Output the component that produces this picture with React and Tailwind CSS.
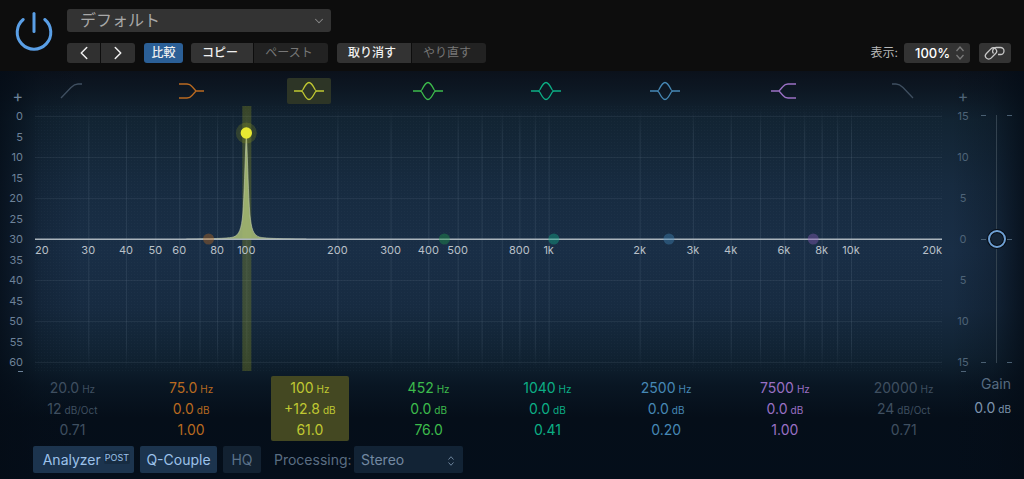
import { ChevronDown, ChevronLeft, ChevronRight } from 'lucide-react';

const BANDS = [
  { id: 'lowcut',    name: 'Low Cut',    freq: '20.0',  gain: '12',    unit: 'dB/Oct', q: '0.71', text: 'text-[#3f4f60]' },
  { id: 'lowshelf',  name: 'Low Shelf',  freq: '75.0',  gain: '0.0',   unit: 'dB', q: '1.00', hz: 75,   color: '#b96a20', text: 'text-[#b96a20]' },
  { id: 'peak1',     name: 'Peak 1',     freq: '100',   gain: '+12.8', unit: 'dB', q: '61.0', hz: 100,  color: '#e8e832', text: 'text-[#c0c832]', active: true },
  { id: 'peak2',     name: 'Peak 2',     freq: '452',   gain: '0.0',   unit: 'dB', q: '76.0', hz: 452,  color: '#1f9a4a', text: 'text-[#3dbb4c]' },
  { id: 'peak3',     name: 'Peak 3',     freq: '1040',  gain: '0.0',   unit: 'dB', q: '0.41', hz: 1040, color: '#12b08a', text: 'text-[#0cae85]' },
  { id: 'peak4',     name: 'Peak 4',     freq: '2500',  gain: '0.0',   unit: 'dB', q: '0.20', hz: 2500, color: '#4088b8', text: 'text-[#4688b5]' },
  { id: 'highshelf', name: 'High Shelf', freq: '7500',  gain: '0.0',   unit: 'dB', q: '1.00', hz: 7500, color: '#8a5cb8', text: 'text-[#9a70c4]' },
  { id: 'highcut',   name: 'High Cut',   freq: '20000', gain: '24',    unit: 'dB/Oct', q: '0.71', text: 'text-[#3f4f60]' },
];

const SHAPES = {
  lowcut:    'M5 20 L15 9.5 Q18.5 6 22 6 H26',
  lowshelf:  'M4 6 H12 Q15 6 17 8.5 L21 13 H29 M4 20 H12 Q15 20 17 17.5 L21 13',
  peak:      'M0 13 H7 Q8 13 9 11.5 Q12.5 4.5 15 4.5 Q17.5 4.5 21 11.5 Q22 13 23 13 H30 M7 13 Q8 13 9 14.5 Q12.5 21.5 15 21.5 Q17.5 21.5 21 14.5 Q22 13 23 13',
  highshelf: 'M2 13 H10 L14 8.5 Q16 6 19 6 H27 M10 13 L14 17.5 Q16 20 19 20 H27',
  highcut:   'M4 6 H8 Q11.5 6 15 9.5 L25 20',
};

const LABELS = [
  [20, '20'], [30, '30'], [40, '40'], [50, '50'], [60, '60'], [80, '80'], [100, '100'],
  [200, '200'], [300, '300'], [400, '400'], [500, '500'], [800, '800'], [1000, '1k'],
  [2000, '2k'], [3000, '3k'], [4000, '4k'], [6000, '6k'], [8000, '8k'], [10000, '10k'], [20000, '20k'],
];

const GRID = [10, 100, 1000]
  .flatMap(d => [1, 2, 3, 4, 5, 6, 7, 8, 9].map(n => n * d))
  .filter(f => f > 20)
  .concat(10000);

// position on the 20 Hz – 20 kHz log axis
const pos = hz => `${(Math.log10(hz / 20) / 3) * 100}%`;

const PEAK = 'M-60 133 C-30 132.7 -18 132.3 -13 131 C-7 129 -5 123 -3.5 108 C-2 88 -1.5 60 0 27 C1.5 60 2 88 3.5 108 C5 123 7 129 13 131 C18 132.3 30 132.7 60 133';

function ShapeIcon({ id }) {
  return (
    <svg width="30" height="26" viewBox="0 0 30 26" fill="none"
         stroke="currentColor" strokeWidth="1.3" aria-hidden="true">
      <path d={SHAPES[id] || SHAPES.peak} />
    </svg>
  );
}

function Stepper({ className }) {
  return (
    <svg width="10" height="14" viewBox="0 0 10 14" fill="none" stroke="currentColor"
         strokeWidth="1.3" className={className} aria-hidden="true">
      <path d="M1.5 5 L5 1 L8.5 5 M1.5 9 L5 13 L8.5 9" />
    </svg>
  );
}

function Header() {
  return (
    <header className="flex h-[71px] items-start bg-[#0d0d0d] pt-[9px] pr-[13px] text-[13px] text-[#f0f0f0]">
      <button type="button" aria-label="Power" className="flex w-[67px] justify-center text-[#5a9fe6]">
        <svg width="42" height="44" viewBox="0 0 42 44" fill="none" stroke="currentColor"
             strokeWidth="3" strokeLinecap="round">
          <path d="M21 4.500 V22.500" />
          <path d="M10.200 10.500 A16.800 16.800 0 1 0 31.800 10.500" />
        </svg>
      </button>

      <div className="flex flex-1 flex-col gap-[11px]">
        <div className="relative w-[264px]">
          <select aria-label="プリセット"
                  className="block h-[23px] w-full appearance-none rounded-[3px] bg-[#333] pl-[13px] text-[16px] leading-[23px] text-[#a8a8a8]">
            <option>デフォルト</option>
          </select>
          <ChevronDown size={14} strokeWidth={1.8} className="pointer-events-none absolute top-[5px] right-[5px] text-[#8a8a8a]" />
        </div>

        <div className="flex h-5 items-stretch leading-5">
          <div className="flex gap-px">
            <button type="button" aria-label="前へ" className="flex w-[33px] items-center justify-center rounded-l-[3px] bg-[#303030]">
              <ChevronLeft size={22} strokeWidth={1.6} />
            </button>
            <button type="button" aria-label="次へ" className="flex w-[34px] items-center justify-center rounded-r-[3px] bg-[#303030]">
              <ChevronRight size={22} strokeWidth={1.6} />
            </button>
          </div>
          <button type="button" className="ml-[9px] w-[39px] rounded-[3px] bg-[#2b5f96] text-[12px] font-medium">比較</button>
          <div className="ml-2 flex gap-px">
            <button type="button" className="w-[62px] rounded-l-[3px] bg-[#333] pr-1 text-[12px] font-medium">コピー</button>
            <button type="button" disabled className="w-[74px] rounded-r-[3px] bg-[#222] pr-1 text-[12px] text-[#777]">ペースト</button>
          </div>
          <div className="ml-[9px] flex gap-px">
            <button type="button" className="w-[74px] rounded-l-[3px] bg-[#333] pr-1 text-[12px] font-medium">取り消す</button>
            <button type="button" disabled className="w-[74px] rounded-r-[3px] bg-[#222] pr-1 text-[12px] text-[#777]">やり直す</button>
          </div>

          <label htmlFor="zoom" className="ml-auto text-[12px] text-[#b8b8b8]">表示:</label>
          <div className="relative ml-[6px]">
            <select id="zoom" className="block h-5 w-[66px] appearance-none rounded-[3px] bg-[#333] pl-[11px] text-[13px] leading-5 font-medium text-white">
              <option>100%</option>
            </select>
            <Stepper className="pointer-events-none absolute top-[3px] right-[5px] text-[#7a7a7a]" />
          </div>
          <button type="button" aria-label="リンク" className="ml-[9px] flex w-8 items-center justify-center rounded-[3px] bg-[#333] text-[#c8c8c8]">
            <svg width="22" height="16" viewBox="0 0 22 16" fill="none" stroke="currentColor" strokeWidth="1.3">
              <path d="M9.500 8.500 C7.500 6.500 9 2.500 12 2.500 H16.500 A3.500 3.500 0 0 1 16.500 9.500 H14" />
              <rect x="0.500" y="5.200" width="13" height="6.600" rx="3.300" transform="rotate(-45 7 8.500)" />
            </svg>
          </button>
        </div>
      </div>
    </header>
  );
}

function Scale({ values, className }) {
  return (
    <div className={`-mt-4 flex flex-col text-[11px] leading-[13px] ${className}`}>
      <span className="text-[16px]">+</span>
      <div className="mt-[7px] flex h-[260px] flex-col justify-between">
        {values.map((v, i) => <span key={i}>{v}</span>)}
      </div>
      <span className="mt-px h-[2px] w-[5px] border-b border-current" />
    </div>
  );
}

function Plot() {
  return (
    <svg className="h-[266px] min-w-0 flex-1 overflow-visible" role="img" aria-label="EQ curve">
      <defs>
        <pattern id="mesh" width="3" height="3" patternUnits="userSpaceOnUse">
          <rect width="1" height="1" fill="#6f8ba8" opacity="0.05" />
        </pattern>
        <linearGradient id="fade" x1="0" y1="0" x2="0" y2="1">
          <stop offset="0" stopColor="#8095a8" stopOpacity="0" />
          <stop offset="0.1" stopColor="#8095a8" stopOpacity="0.15" />
          <stop offset="0.9" stopColor="#8095a8" stopOpacity="0.15" />
          <stop offset="1" stopColor="#8095a8" stopOpacity="0" />
        </linearGradient>
      </defs>
      <rect width="100%" height="266" fill="url(#mesh)" />

      {GRID.map(f => (
        <rect key={f} x={pos(f)} y="2" width="1" height="262" fill="url(#fade)" />
      ))}
      {[10, 51, 92, 174, 215, 256].map(y => (
        <rect key={y} y={y} width="100%" height="1" fill="#8095a8" opacity="0.12" />
      ))}

      <svg x={pos(100)} overflow="visible">
        <rect x="-4" y="0" width="9" height="265" fill="#a0a820" opacity="0.28" />
        <path d={PEAK} fill="#a4b872" fillOpacity="0.9" stroke="#c4ceb0" strokeWidth="1" strokeOpacity="0.6" />
      </svg>
      <rect y="132.500" width="100%" height="1.500" fill="#aab4bc" />

      {BANDS.filter(b => b.hz && !b.active).map(b => (
        <circle key={b.id} cx={pos(b.hz)} cy="133" r="5.500" fill={b.color} opacity="0.4" />
      ))}
      <circle cx={pos(100)} cy="27" r="10.500" fill="#a0a820" opacity="0.22" />
      <circle cx={pos(100)} cy="27" r="5.700" fill="#e8e832" />

      {LABELS.map(([f, label]) => (
        <text key={f} x={pos(f)} y="148" fontSize="11" fill="#b9c0c8"
              textAnchor={f === 20 ? 'start' : f === 20000 ? 'end' : 'middle'}>
          {label}
        </text>
      ))}
    </svg>
  );
}

function Ticks() {
  return (
    <div className="flex w-[5px] flex-col justify-between">
      <i className="h-px bg-[#4a5f72]" />
      <i className="h-px bg-[#4a5f72]" />
      <i className="h-px bg-[#4a5f72]" />
    </div>
  );
}

function Fader() {
  return (
    <div className="mt-[9px] mr-3 flex h-[248px] gap-px">
      <Ticks />
      <div className="h-full w-[19px]">
        <input type="range" min="-15" max="15" defaultValue="0" aria-label="Gain"
               className="block h-full w-[19px] appearance-none bg-[linear-gradient(#33424f,#33424f)] bg-[length:1px_100%] bg-center bg-no-repeat [writing-mode:vertical-lr] [&::-webkit-slider-thumb]:size-[18px] [&::-webkit-slider-thumb]:appearance-none [&::-webkit-slider-thumb]:rounded-full [&::-webkit-slider-thumb]:border-2 [&::-webkit-slider-thumb]:border-[#6fa0d4] [&::-webkit-slider-thumb]:bg-[#142436] [&::-webkit-slider-thumb]:shadow-[0_0_0_1px_#060c14,inset_0_0_0_1px_#060c14]" />
      </div>
      <Ticks />
    </div>
  );
}

function Unit({ children }) {
  return <small className="ml-[3px] text-[10px] leading-none">{children}</small>;
}

function BandValues({ band }) {
  return (
    <div className={`w-[78px] rounded-[2px] py-px text-center text-[14px] leading-[21px] whitespace-nowrap ${band.text} ${band.active ? 'bg-[#444822]' : ''}`}>
      <p>{band.freq}<Unit>Hz</Unit></p>
      <p>{band.gain}<Unit>{band.unit}</Unit></p>
      <p>{band.q}</p>
    </div>
  );
}

function Footer() {
  return (
    <footer className="mt-[5px] flex h-[27px] items-stretch pl-[33px] text-[14px] leading-[27px]">
      <button type="button" className="flex w-[101px] justify-end gap-[3px] rounded-[2px] bg-[#1c344e] pr-1 text-[#9cc2ea]">
        Analyzer
        <span className="mt-[5px] h-[13px] rounded-[2px] bg-[#172c42] px-px text-[9px] leading-[14px]">POST</span>
      </button>
      <button type="button" className="ml-[6px] w-[77px] rounded-[2px] bg-[#1c344e] text-[#9cc2ea]">Q-Couple</button>
      <button type="button" className="ml-[6px] w-[38px] rounded-[2px] bg-[#122131] text-[#5a7189]">HQ</button>
      <label htmlFor="processing" className="ml-[13px] w-20 text-[#5a6d82]">Processing:</label>
      <div className="relative">
        <select id="processing" className="block h-[27px] w-[109px] appearance-none rounded-[2px] bg-[#122335] pl-[7px] text-[14px] leading-[27px] text-[#7389a2]">
          <option>Stereo</option>
        </select>
        <Stepper className="pointer-events-none absolute top-[10px] right-[7px] h-[10px] text-[#7389a2]" />
      </div>
    </footer>
  );
}

export default function App() {
  return (
    <div className="flex min-h-screen flex-col bg-[#040e1a] font-['Inter','Noto_Sans_CJK_JP',sans-serif]">
      <Header />
      <main className="flex-1 bg-[linear-gradient(to_right,#040c16cc,#040c1688_2%,#040c1633_4%,#040c1600_8%,#040c1600_93%,#040c1644_97%,#040c16cc),linear-gradient(#0b111b,#0d1824_5%,#122433_12%,#172b40_28%,#192e46_44%,#172b41_58%,#102232_70%,#091623_77%,#050e19_85%,#040e1a)] pb-[6px]">
        <div className="flex h-[35px] pt-[7px] pr-[62px] pl-3">
          <div className="grid flex-1 grid-cols-8 justify-items-center">
            {BANDS.map(b => (
              <button key={b.id} type="button" aria-label={b.name}
                      className={`flex h-[26px] w-11 items-center justify-center rounded-[2px] ${b.text} ${b.active ? 'bg-[#2d3526]' : ''}`}>
                <ShapeIcon id={b.id} />
              </button>
            ))}
          </div>
        </div>

        <div className="flex h-[266px]">
          <Scale values={[0, 5, 10, 15, 20, 25, 30, 35, 40, 45, 50, 55, 60]}
                 className="w-[35px] items-end pr-3 text-right text-[#6d8299]" />
          <Plot />
          <Scale values={[15, 10, 5, 0, 5, 10, 15]}
                 className="w-[39px] items-center pl-[3px] text-center text-[#4e6377]" />
          <Fader />
        </div>

        <div className="flex pt-1 pl-[13px]">
          <div className="grid flex-1 grid-cols-8 justify-items-center">
            {BANDS.map(b => <BandValues key={b.id} band={b} />)}
          </div>
          <div className="flex w-[61px] flex-col gap-1 pr-[13px] text-right text-[14px] leading-[20px]">
            <p className="-mt-[2px] text-[#566b80]">Gain</p>
            <p className="text-[#7d94ad]">0.0<Unit>dB</Unit></p>
          </div>
        </div>

        <Footer />
      </main>
    </div>
  );
}
